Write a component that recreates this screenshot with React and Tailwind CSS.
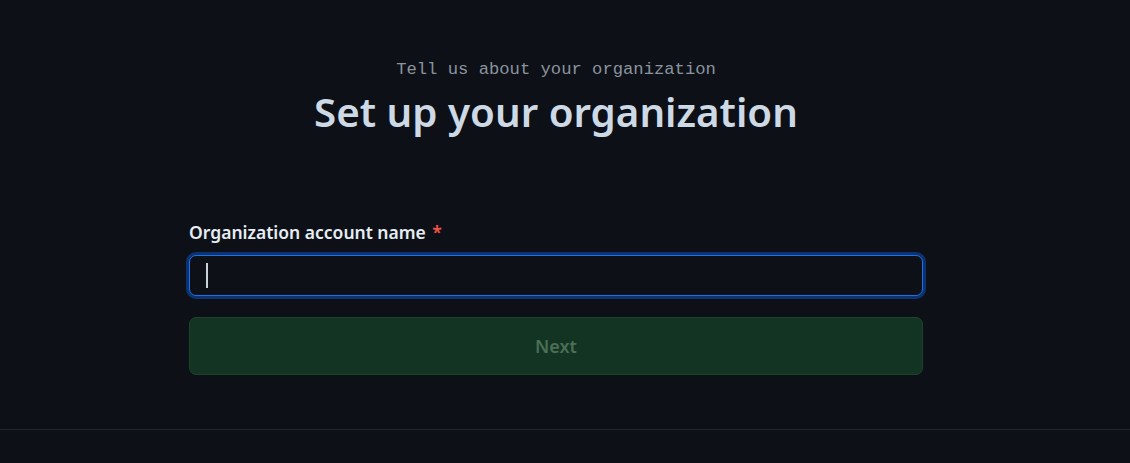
export default function App() {
  return (
    <div className="min-h-screen bg-[#0d1117] flex flex-col" style={{ fontFamily: '"Noto Sans", "Open Sans", sans-serif' }}>
      <div className="h-[429px] flex flex-col items-center pr-[18px]">
        <p className="mt-[59px] text-[17.2px] leading-[22px] text-[#8b949e]" style={{ fontFamily: '"Liberation Mono", "DejaVu Sans Mono", monospace' }}>
          Tell us about your organization
        </p>
        <h1 className="mt-[5px] text-[40.3px] leading-[52px] font-semibold text-[#cdd9e5]">
          Set up your organization
        </h1>

        <form className="mt-[82px] w-[734px] flex flex-col">
          <label htmlFor="org" className="text-[17.5px] leading-[24px] font-semibold text-[#e6edf3]">
            Organization account name <span className="ml-[2px] text-[#f85149]">*</span>
          </label>
          <div className="mt-[11px] h-[41px] rounded-[7px] border border-[#1f6feb] bg-[#0d1117] ring-[3px] ring-[#0c326f] flex items-center pl-4 pr-4">
            <span className="w-[2px] h-[25px] bg-[#c9d1d9] shrink-0" />
            <input id="org" className="flex-1 bg-transparent outline-none text-[#e6edf3] caret-transparent" />
          </div>
          <button
            type="button"
            disabled
            className="mt-[21px] h-[58px] rounded-[7px] border border-[#1d4428] bg-[#143423] text-[#4b6e56] text-[18px] font-semibold"
          >
            Next
          </button>
        </form>
      </div>
      <div className="border-t border-[#21262d]" />
    </div>
  );
}
